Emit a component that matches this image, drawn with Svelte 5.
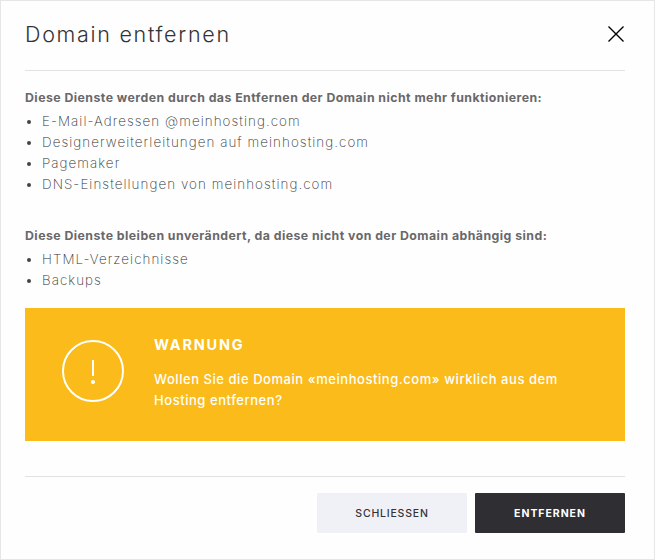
<script>
  let open = $state(true);

  const domain = 'meinhosting.com';

  const sections = [
    {
      title: 'Diese Dienste werden durch das Entfernen der Domain nicht mehr funktionieren:',
      items: [
        `E-Mail-Adressen @${domain}`,
        `Designerweiterleitungen auf ${domain}`,
        'Pagemaker',
        `DNS-Einstellungen von ${domain}`
      ]
    },
    {
      title: 'Diese Dienste bleiben unverändert, da diese nicht von der Domain abhängig sind:',
      items: ['HTML-Verzeichnisse', 'Backups']
    }
  ];

  function close() {
    open = false;
  }
</script>

{#if open}
  <div class="dialog" role="dialog" aria-labelledby="dialog-title">
    <header class="dialog-header">
      <h1 id="dialog-title">Domain entfernen</h1>
      <button class="close-button" aria-label="Schliessen" onclick={close}>
        <svg width="18" height="18" viewBox="0 0 18 18">
          <path d="M1.5 1.5l15 15M16.5 1.5l-15 15" stroke="#000" stroke-width="1.4" />
        </svg>
      </button>
    </header>

    <div class="dialog-body">
      {#each sections as section}
        <section>
          <h2>{section.title}</h2>
          <ul>
            {#each section.items as item}
              <li><span>{item}</span></li>
            {/each}
          </ul>
        </section>
      {/each}

      <div class="warning">
        <svg class="warning-icon" width="62" height="62" viewBox="0 0 62 62">
          <circle cx="31" cy="31" r="30" fill="none" stroke="#fff" stroke-width="2" />
          <path d="M31 20v16" stroke="#fff" stroke-width="2" />
          <circle cx="31" cy="42" r="2.1" fill="#fff" />
        </svg>
        <div class="warning-text">
          <h3>WARNUNG</h3>
          <p>Wollen Sie die Domain «{domain}» wirklich aus dem<br />Hosting entfernen?</p>
        </div>
      </div>
    </div>

    <footer class="dialog-footer">
      <button class="button" onclick={close}><span>SCHLIESSEN</span></button>
      <button class="button primary" onclick={close}><span>ENTFERNEN</span></button>
    </footer>
  </div>
{/if}

<style>
  :global(body) {
    background: #fff;
  }

  .dialog {
    box-sizing: border-box;
    width: 655px;
    height: 560px;
    padding: 0 29px 0 24px;
    border: 1px solid #e6e6e6;
    background: #fefefe;
    color: #333336;
    font-family: Inter, 'Open Sans', sans-serif;
    font-size: 13px;
    line-height: 21px;
  }

  .dialog-header {
    display: flex;
    justify-content: space-between;
    align-items: center;
    box-sizing: border-box;
    height: 70px;
    padding-bottom: 3px;
    border-bottom: 1px solid #e2e2e2;
  }

  h1,
  h2,
  h3,
  p,
  ul {
    margin: 0;
    padding: 0;
  }

  h1 {
    font-size: 21.5px;
    font-weight: 300;
    letter-spacing: 1.7px;
    white-space: nowrap;
  }

  .close-button {
    display: flex;
    padding: 0;
    border: none;
    background: none;
    cursor: pointer;
  }

  section {
    padding-top: 16px;
    height: 122px;
  }

  section + section {
    height: 83px;
  }

  h2 {
    color: #68686a;
    font-size: 12.3px;
    font-weight: 700;
    letter-spacing: 0.46px;
    white-space: nowrap;
  }

  ul {
    padding-top: 3px;
    list-style: none;
  }

  li {
    display: flex;
    align-items: center;
    gap: 11px;
    padding-left: 2px;
    color: #333;
    font-size: 13.4px;
    font-weight: 200;
    letter-spacing: 1.06px;
    white-space: nowrap;
  }

  li::before {
    content: '';
    width: 4px;
    height: 4px;
    border-radius: 50%;
    background: #444;
  }

  .warning {
    display: flex;
    box-sizing: border-box;
    height: 133px;
    padding: 32px 37px;
    background: #fabb1b;
    color: #fff;
  }

  .warning-icon {
    flex: none;
    margin-right: 30px;
  }

  .warning-text {
    margin-top: -6px;
    white-space: nowrap;
  }

  h3 {
    font-size: 14.5px;
    font-weight: 700;
    letter-spacing: 1.8px;
  }

  p {
    padding-top: 14px;
    font-weight: 500;
    letter-spacing: 0.55px;
  }

  .dialog-footer {
    display: flex;
    justify-content: flex-end;
    gap: 8px;
    margin-top: 35px;
    padding-top: 16px;
    border-top: 1px solid #e2e2e2;
  }

  .button {
    width: 150px;
    height: 40px;
    padding: 0;
    border: none;
    border-radius: 1px;
    background: #f0f1f6;
    color: #333336;
    font-family: inherit;
    font-size: 10.5px;
    font-weight: 500;
    letter-spacing: 0.8px;
    cursor: pointer;
  }

  .primary {
    background: #2f2e33;
    color: #fff;
    font-weight: 700;
    letter-spacing: 0.95px;
  }
</style>
